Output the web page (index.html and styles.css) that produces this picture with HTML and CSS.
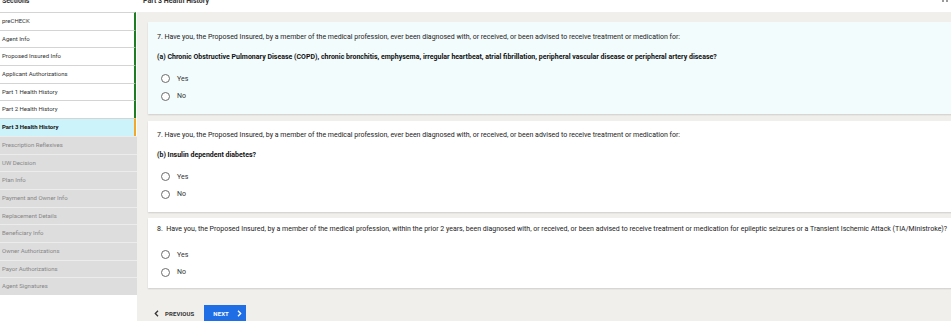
FILE: index.html
```html
<!DOCTYPE html>
<html>
<head>
<meta charset="utf-8">
<link rel="stylesheet" href="styles.css">
</head>
<body>
<div class="app">
  <aside class="sidebar">
    <div class="side-head"><span>Sections</span></div>
    <ul class="nav">
      <li class="done">preCHECK</li>
      <li class="done">Agent Info</li>
      <li class="done">Proposed Insured Info</li>
      <li class="done">Applicant Authorizations</li>
      <li class="done">Part 1 Health History</li>
      <li class="done">Part 2 Health History</li>
      <li class="active">Part 3 Health History</li>
      <li class="locked">Prescription Reflexives</li>
      <li class="locked">UW Decision</li>
      <li class="locked">Plan Info</li>
      <li class="locked">Payment and Owner Info</li>
      <li class="locked">Replacement Details</li>
      <li class="locked">Beneficiary Info</li>
      <li class="locked">Owner Authorizations</li>
      <li class="locked">Payor Authorizations</li>
      <li class="locked">Agent Signatures</li>
    </ul>
  </aside>
  <main class="main">
    <div class="main-head">
      <span class="title">Part 3 Health History</span>
      <svg class="corner-icon" width="8" height="5" viewBox="0 0 8 5"><rect x="1" y="0" width="2" height="3" fill="#9a9a9a"/><rect x="5" y="0" width="2" height="3" fill="#9a9a9a"/></svg>
    </div>
    <div class="content">
      <section class="card card-current">
        <p class="q">7. Have you, the Proposed Insured, by a member of the medical profession, ever been diagnosed with, or received, or been advised to receive treatment or medication for:</p>
        <p class="sub">(a) Chronic Obstructive Pulmonary Disease (COPD), chronic bronchitis, emphysema, irregular heartbeat, atrial fibrillation, peripheral vascular disease or peripheral artery disease?</p>
        <div class="radios">
          <label class="radio"><span class="dot"></span>Yes</label>
          <label class="radio"><span class="dot"></span>No</label>
        </div>
      </section>
      <section class="card card-b">
        <p class="q">7. Have you, the Proposed Insured, by a member of the medical profession, ever been diagnosed with, or received, or been advised to receive treatment or medication for:</p>
        <p class="sub">(b) Insulin dependent diabetes?</p>
        <div class="radios">
          <label class="radio"><span class="dot"></span>Yes</label>
          <label class="radio"><span class="dot"></span>No</label>
        </div>
      </section>
      <section class="card card-c">
        <p class="q">8.&nbsp; Have you, the Proposed Insured, by a member of the medical profession, within the prior 2 years, been diagnosed with, or received, or been advised to receive treatment or medication for epileptic seizures or a Transient Ischemic Attack (TIA/Ministroke)?</p>
        <div class="radios radios-wide">
          <label class="radio"><span class="dot"></span>Yes</label>
          <label class="radio"><span class="dot"></span>No</label>
        </div>
      </section>
      <div class="pager">
        <button class="btn-prev"><svg width="5" height="7" viewBox="0 0 5 7"><path d="M4 0.8 L1.3 3.5 L4 6.2" fill="none" stroke="#333" stroke-width="1.3"/></svg><span>PREVIOUS</span></button>
        <button class="btn-next"><span>NEXT</span><svg width="5" height="7" viewBox="0 0 5 7"><path d="M1 0.8 L3.7 3.5 L1 6.2" fill="none" stroke="#fff" stroke-width="1.3"/></svg></button>
      </div>
    </div>
  </main>
</div>
</body>
</html>
```
FILE: styles.css
```css
* { box-sizing: border-box; }
html, body { margin: 0; padding: 0; }
body {
  font-family: Roboto, "Liberation Sans", Arial, sans-serif;
  color: #222;
  background: #fff;
  width: 951px;
  height: 321px;
  overflow: hidden;
}
.app {
  display: grid;
  grid-template-columns: 137px 1fr;
  height: 321px;
  overflow: hidden;
}
.sidebar {
  background: #fff;
}
.side-head, .main-head {
  height: 12px;
  overflow: hidden;
  background: #fff;
}
.side-head span, .main-head .title {
  display: block;
  margin-top: -4px;
  line-height: 10px;
  font-size: 7px;
  font-weight: 700;
  color: #333;
}
.side-head span { padding-left: 2px; }
.nav {
  list-style: none;
  margin: 0;
  padding: 0;
}
.nav li {
  height: 17.7px;
  line-height: 16.7px;
  border-top: 1px solid #d4d4d4;
  font-size: 6px;
  padding-left: 2px;
  color: #333;
  white-space: nowrap;
}
.nav li.done {
  margin-right: 1px;
  border-right: 2px solid #1e7d22;
}
.nav li.active {
  margin-right: 1px;
  border-right: 2px solid #f3a82a;
  background: #cdf3fa;
  font-weight: 700;
  color: #111;
}
.nav li.locked {
  background: #dddddd;
  color: #878787;
  border-top: 1px solid #ececec;
}
.main {
  background: #f1efec;
  display: flex;
  flex-direction: column;
  overflow: hidden;
}
.main-head {
  display: flex;
  justify-content: space-between;
  padding-left: 6px;
  padding-right: 2px;
}
.corner-icon { margin-top: -1px; }
.content {
  padding: 10px 0 0 11px;
  display: flex;
  flex-direction: column;
}
.card {
  width: 830px;
  background: #fff;
  padding: 10px 9px 9px 9px;
  box-shadow: 0 1px 1.5px rgba(0,0,0,0.14);
}
.card-current {
  background: #f3fcfd;
  margin-bottom: 7px;
}
.card-b {
  padding-top: 9px;
  margin-bottom: 6px;
}
.card-c {
  padding-top: 6px;
  padding-bottom: 7px;
}
.q, .sub {
  margin: 0;
  font-size: 7px;
  line-height: 10px;
  white-space: nowrap;
  color: #222;
}
.sub {
  margin-top: 10px;
  font-weight: 700;
  color: #111;
}
.radios {
  margin-top: 8px;
  display: flex;
  flex-direction: column;
}
.radios-wide { margin-top: 12px; }
.radio {
  height: 17.5px;
  display: flex;
  align-items: center;
  font-size: 7px;
  color: #333;
  padding-left: 4px;
}
.dot {
  width: 9px;
  height: 9px;
  border-radius: 50%;
  border: 1px solid #6c6c6c;
  background: #fff;
  margin-right: 7px;
}
.pager {
  display: flex;
  align-items: center;
  gap: 10px;
  margin-top: 17px;
  padding-left: 6px;
}
.pager button {
  font-family: inherit;
  font-size: 6px;
  font-weight: 700;
  border: 0;
  height: 16px;
  display: flex;
  align-items: center;
  cursor: pointer;
  letter-spacing: 0.1px;
}
.btn-prev {
  background: transparent;
  color: #333;
  padding: 0;
  gap: 6px;
}
.btn-next {
  background: #1f6ee6;
  color: #fff;
  width: 42px;
  padding: 0 0 0 9px;
  gap: 8px;
}
```
